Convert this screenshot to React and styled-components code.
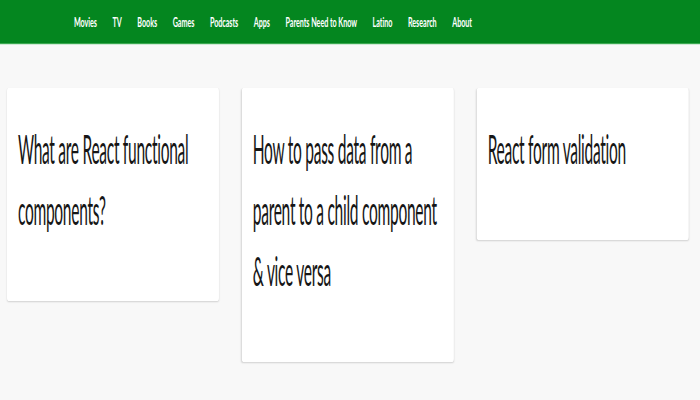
import React from 'react';
import styled, { createGlobalStyle } from 'styled-components';

// the page is laid out wide and then squeezed horizontally, as in the shot
const PAGE_WIDTH = 1800;
const SQUEEZE = 700 / PAGE_WIDTH;

const GlobalStyle = createGlobalStyle`
    html, body {
        margin: 0;
        padding: 0;
        background-color: #f8f8f8;
        overflow: hidden;
    }
    body {
        font-family: Lato, "Open Sans", sans-serif;
    }
`;

const Page = styled.div`
    width: ${PAGE_WIDTH}px;
    min-height: 400px;
    transform: scaleX(${SQUEEZE});
    transform-origin: top left;
    background-color: #f8f8f8;
`;

const NavBar = styled.nav`
    height: 43px;
    background-color: #04861f;
    border-bottom: 1px solid #3aa84f;
    display: flex;
    align-items: center;
    padding-left: 190px;
    box-shadow: 0 1px 0 #cfe9d4;
`;

const NavList = styled.ul`
    display: flex;
    align-items: center;
    gap: 40px;
    list-style: none;
    margin: 0;
    padding: 0;
`;

const NavLink = styled.a`
    display: inline-block;
    color: #ffffff;
    font-weight: 700;
    font-size: 18.5px;
    text-decoration: none;
    transform: scaleY(0.7);
    letter-spacing: -0.1px;
    cursor: pointer;
`;

const Cards = styled.main`
    display: grid;
    grid-template-columns: repeat(3, 545px);
    gap: 59px;
    align-items: start;
    padding: 44px 28px 0 18px;
`;

const Card = styled.article`
    background-color: #ffffff;
    border-radius: 3px;
    box-shadow: 0 1px 3px rgba(0, 0, 0, 0.16), 0 0 1px rgba(0, 0, 0, 0.08);
    padding: 31px 28px 60px;
`;

const CardTitle = styled.h2`
    margin: 0;
    font-family: Lato, "Open Sans", sans-serif;
    font-weight: 400;
    font-size: 40px;
    line-height: 61px;
    letter-spacing: -0.75px;
    color: #161616;
`;

const links = [
    'Movies',
    'TV',
    'Books',
    'Games',
    'Podcasts',
    'Apps',
    'Parents Need to Know',
    'Latino',
    'Research',
    'About',
];

const posts = [
    'What are React functional components?',
    'How to pass data from a parent to a child component & vice versa',
    'React form validation',
];

export default function App() {
    return (
        <>
            <GlobalStyle />
            <Page>
                <NavBar>
                    <NavList>
                        {links.map((link) => (
                            <li key={link}>
                                <NavLink>{link}</NavLink>
                            </li>
                        ))}
                    </NavList>
                </NavBar>
                <Cards>
                    {posts.map((title) => (
                        <Card key={title}>
                            <CardTitle>{title}</CardTitle>
                        </Card>
                    ))}
                </Cards>
            </Page>
        </>
    );
}
